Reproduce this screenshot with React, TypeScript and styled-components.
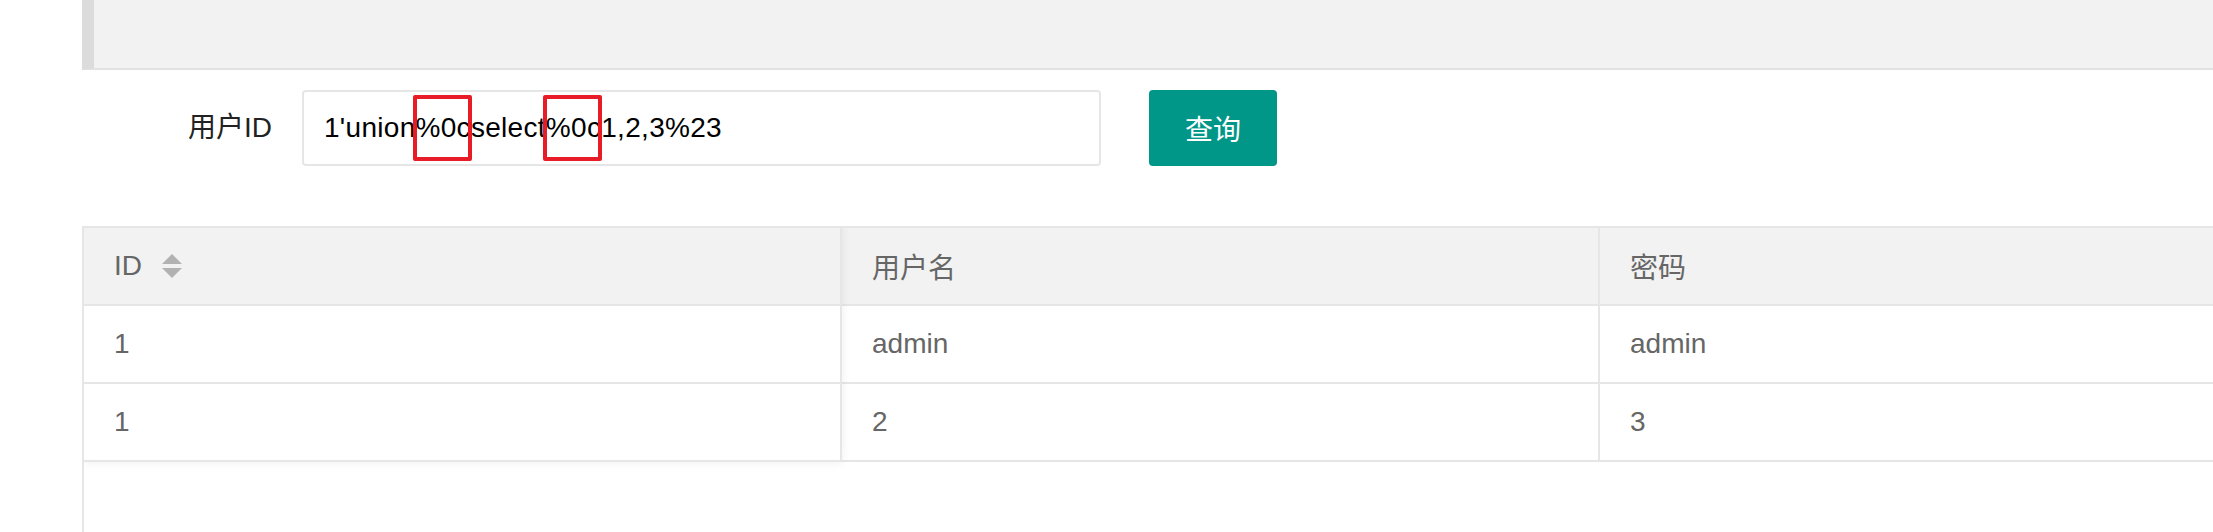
import styled, { createGlobalStyle } from 'styled-components';

const GlobalStyle = createGlobalStyle`
  html, body {
    margin: 0;
    padding: 0;
    overflow: hidden;
    background: #fff;
    font-family: "Liberation Sans", "Noto Sans CJK SC", sans-serif;
  }
`;

const Page = styled.div`
  padding-left: 82px;
  width: 2276px;
`;

const Quote = styled.div`
  height: 68px;
  background: #f2f2f2;
  border-left: 12px solid #dcdcdc;
  border-bottom: 2px solid #e2e2e2;
`;

const FormRow = styled.div`
  display: flex;
  align-items: center;
  margin-top: 20px;
`;

const Label = styled.label`
  box-sizing: border-box;
  width: 220px;
  padding: 0 30px;
  text-align: right;
  font-size: 28px;
  line-height: 40px;
  color: #222;
`;

const InputBox = styled.div`
  box-sizing: border-box;
  width: 799px;
  height: 76px;
  padding-left: 20px;
  display: flex;
  align-items: center;
  border: 2px solid #e6e6e6;
  border-radius: 4px;
  font-size: 28px;
  letter-spacing: 0.3px;
  color: #000;
  white-space: pre;
`;

const Mark = styled.span`
  position: relative;

  &::after {
    content: '';
    position: absolute;
    left: -3px;
    right: -1px;
    top: -17px;
    bottom: -17px;
    border: 4px solid #e81c26;
    border-radius: 2px;
  }
`;

const SearchButton = styled.button`
  margin-left: 48px;
  height: 76px;
  padding: 0 36px;
  border: none;
  border-radius: 4px;
  background: #009688;
  color: #fff;
  font-family: inherit;
  font-size: 28px;
  cursor: pointer;
`;

const TableWrap = styled.div`
  position: relative;
  margin-top: 60px;
  height: 400px;
  border-left: 2px solid #e6e6e6;
`;

const Row = styled.div<{ $head?: boolean }>`
  display: grid;
  grid-template-columns: repeat(3, 758px);
  background: ${p => (p.$head ? '#f2f2f2' : '#fff')};
  border-top: ${p => (p.$head ? '2px solid #e6e6e6' : 'none')};
`;

const Cell = styled.div`
  box-sizing: border-box;
  height: 78px;
  padding: 0 30px;
  display: flex;
  align-items: center;
  border-right: 2px solid #e6e6e6;
  border-bottom: 2px solid #e6e6e6;
  font-size: 28px;
  color: #666;
`;

const Sort = styled.span`
  display: inline-flex;
  flex-direction: column;
  gap: 4px;
  margin-left: 20px;
`;

const Edge = styled.i<{ $down?: boolean }>`
  width: 0;
  height: 0;
  border-left: 10px solid transparent;
  border-right: 10px solid transparent;
  ${p => (p.$down ? 'border-top' : 'border-bottom')}: 10px solid #b2b2b2;
`;

const FixedShadow = styled.div`
  position: absolute;
  left: 0;
  top: 0;
  width: 758px;
  height: 236px;
  box-shadow: 0 0 10px rgba(0, 0, 0, 0.07);
  clip-path: inset(2px -20px -20px 0);
  pointer-events: none;
`;

const rows = [
  ['1', 'admin', 'admin'],
  ['1', '2', '3'],
];

export default function App() {
  return (
    <Page>
      <GlobalStyle />
      <Quote />

      <FormRow>
        <Label>用户ID</Label>
        <InputBox>
          1'union<Mark>%0c</Mark>select<Mark>%0c</Mark>1,2,3%23
        </InputBox>
        <SearchButton>查询</SearchButton>
      </FormRow>

      <TableWrap>
        <Row $head>
          <Cell>
            ID
            <Sort>
              <Edge />
              <Edge $down />
            </Sort>
          </Cell>
          <Cell>用户名</Cell>
          <Cell>密码</Cell>
        </Row>
        {rows.map((r, i) => (
          <Row key={i}>
            {r.map((v, j) => (
              <Cell key={j}>{v}</Cell>
            ))}
          </Row>
        ))}
        <FixedShadow />
      </TableWrap>
    </Page>
  );
}
